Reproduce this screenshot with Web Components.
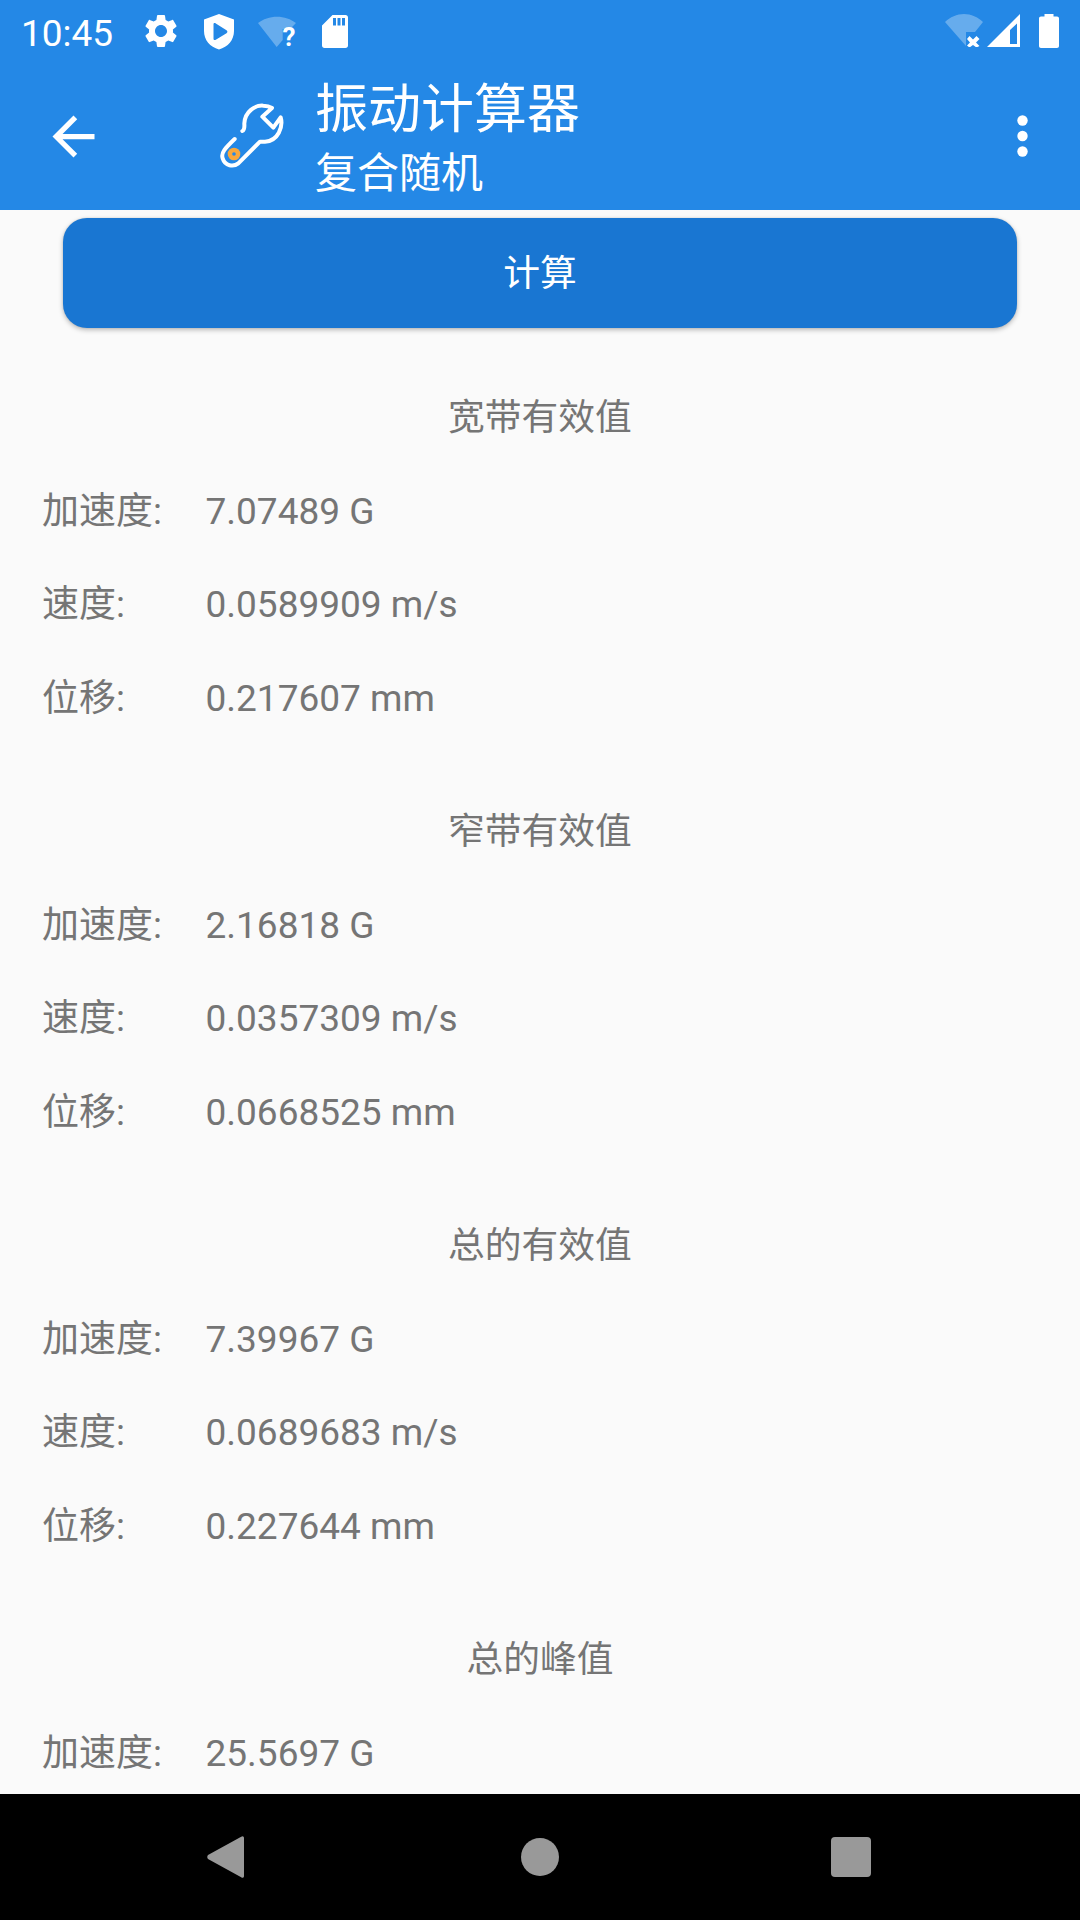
<!DOCTYPE html>
<html lang="zh-CN"><head><meta charset="utf-8"><title>振动计算器</title>
<style>
html,body{margin:0;padding:0;background:#fafafa}
body{font-family:Roboto,"Noto Sans CJK SC",sans-serif;width:1080px;height:1920px;overflow:hidden}
vib-app{display:flex}
</style></head><body>
<vib-app>
  <result-section heading="宽带有效值">
    <result-row label="加速度:" value="7.07489 G"></result-row>
    <result-row label="速度:" value="0.0589909 m/s"></result-row>
    <result-row label="位移:" value="0.217607 mm"></result-row>
  </result-section>
  <result-section heading="窄带有效值">
    <result-row label="加速度:" value="2.16818 G"></result-row>
    <result-row label="速度:" value="0.0357309 m/s"></result-row>
    <result-row label="位移:" value="0.0668525 mm"></result-row>
  </result-section>
  <result-section heading="总的有效值">
    <result-row label="加速度:" value="7.39967 G"></result-row>
    <result-row label="速度:" value="0.0689683 m/s"></result-row>
    <result-row label="位移:" value="0.227644 mm"></result-row>
  </result-section>
  <result-section heading="总的峰值">
    <result-row label="加速度:" value="25.5697 G"></result-row>
  </result-section>
</vib-app>
<script>
const def=(name,html,extra)=>customElements.define(name,class extends HTMLElement{
  constructor(){super();this.attachShadow({mode:'open'}).innerHTML=html;}
  connectedCallback(){if(extra)extra(this);}
});
def('status-bar',`<style>
:host{display:flex;align-items:flex-start;height:63px;background:#2488e6;color:#fff;box-sizing:border-box;flex:none}
.t{font:37px/1 Roboto,sans-serif;margin:15px 0 0 21px;width:120px;height:42px;flex:none}
svg{display:block;flex:none;fill:#fff}
.sp{flex:1}
</style>
<div class="t">10:45</div>
<svg width="40" height="40" viewBox="0 0 24 24" style="margin-top:11px"><path d="M19.14 12.94c.04-.3.06-.61.06-.94 0-.32-.02-.64-.07-.94l2.03-1.58c.18-.14.23-.41.12-.61l-1.92-3.32c-.12-.22-.37-.29-.59-.22l-2.39.96c-.5-.38-1.03-.7-1.62-.94l-.36-2.54c-.04-.24-.24-.41-.48-.41h-3.84c-.24 0-.43.17-.47.41l-.36 2.54c-.59.24-1.13.57-1.62.94l-2.39-.96c-.22-.08-.47 0-.59.22L2.74 8.87c-.12.21-.08.47.12.61l2.03 1.58c-.05.3-.09.63-.09.94s.02.64.07.94l-2.03 1.58c-.18.14-.23.41-.12.61l1.92 3.32c.12.22.37.29.59.22l2.39-.96c.5.38 1.03.7 1.62.94l.36 2.54c.05.24.24.41.48.41h3.84c.24 0 .44-.17.47-.41l.36-2.54c.59-.24 1.13-.56 1.62-.94l2.39.96c.22.08.47 0 .59-.22l1.92-3.32c.12-.22.07-.47-.12-.61l-2.01-1.58zM12 15.6c-1.98 0-3.6-1.62-3.6-3.6s1.62-3.6 3.6-3.6 3.6 1.62 3.6 3.6-1.62 3.6-3.6 3.6z"/></svg>
<svg width="30" height="36" viewBox="0 0 30 36" style="margin:14px 0 0 23px"><path fill-rule="evenodd" d="M15 0L30 5.5V17C30 26 24 33 15 35.5C6 33 0 26 0 17V5.5ZM9.5 10.5V24.5C9.5 26 10.6 26.4 11.8 25.7L22.5 19.2C23.7 18.4 23.7 17 22.5 16.2L11.8 9.4C10.6 8.7 9.5 9 9.5 10.5Z"/></svg>
<svg width="44" height="40" viewBox="0 0 44 40" style="margin:16px 0 0 24px"><path fill-opacity=".3" d="M0 7C5 3 12 .7 19 .7C26 .7 33 3 38 7L32 13H24.7V24L18.7 31Z"/><text x="31" y="30" text-anchor="middle" font-family="Roboto,sans-serif" font-weight="700" font-size="26" fill="#fff">?</text></svg>
<svg width="26" height="33" viewBox="0 0 26 33" style="margin:15px 0 0 20px"><path fill-rule="evenodd" d="M10.5 0H23.5C25 0 26 1 26 2.5V30.5C26 32 25 33 23.5 33H2.5C1 33 0 32 0 30.5V10.5ZM11 3V10.5H14V3ZM15.5 3V10.5H18.5V3ZM20 3V10.5H23V3Z"/></svg>
<div class="sp"></div>
<svg width="38" height="33" viewBox="0 0 38 33" style="margin-top:14px"><path fill-opacity=".3" d="M0 8C5 3 12 0 19 0C26 0 33 3 38 8L30 18H21V32Z"/><path d="M24.5 22L28 25.5L31.5 22L34.5 25L31 28.5L34.5 32L31.5 33.5L28 31L24.5 33.5L22 31.5L25 28.5L22 25Z"/></svg>
<svg width="33" height="33" viewBox="0 0 33 33" style="margin:14px 0 0 4px"><path fill-rule="evenodd" d="M33 0V33H0ZM23 30H30V9.5L23 16Z"/></svg>
<svg width="20" height="34" viewBox="0 0 20 34" style="margin:14px 21px 0 19px"><path d="M5.5 0H14.5V2.5H18C19.2 2.5 20 3.3 20 4.5V32C20 33.2 19.2 34 18 34H2C.8 34 0 33.2 0 32V4.5C0 3.3.8 2.5 2 2.5H5.5Z"/></svg>`);

def('app-bar',`<style>
:host{display:flex;align-items:flex-start;height:147px;background:#2488e6;color:#fff;box-sizing:border-box;font-family:Roboto,"Noto Sans CJK SC",sans-serif;flex:none}
svg{display:block;flex:none}
.txt{display:flex;flex-direction:column;margin:16px 0 0 -5px;flex:1}
.a{font-size:53px;line-height:62px;height:62px;white-space:nowrap}
.b{font-size:42px;line-height:50px;height:50px;margin-top:8px;white-space:nowrap}
</style>
<svg width="63" height="63" viewBox="0 0 24 24" style="margin:41.5px 0 0 42px" fill="#fff"><path d="M20 11H7.83l5.59-5.59L12 4l-8 8 8 8 1.41-1.41L7.83 13H20v-2z"/></svg>
<svg width="120" height="100" viewBox="0 0 360 300" style="margin:17px 0 0 95px"><path d="M127 153C135 150 133 140 133 130C135 95 165 75 190 77C200 77 210 80 216 84L187 110L220 143L242 112C250 140 235 183 195 185L180 185L115 250C100 262 75 258 68 235C62 218 75 205 104 177" fill="none" stroke="#fff" stroke-width="12" stroke-linecap="round" stroke-linejoin="round"/><circle cx="102" cy="222" r="19" fill="#f9a83b"/><circle cx="102" cy="222" r="5.5" fill="#2488e6"/></svg>
<div class="txt"><div class="a">振动计算器</div><div class="b">复合随机</div></div>
<svg width="11" height="42" viewBox="0 0 11 42" style="margin:52px 52px 0 0" fill="#fff"><circle cx="5.5" cy="5.5" r="5.2"/><circle cx="5.5" cy="21" r="5.2"/><circle cx="5.5" cy="36.5" r="5.2"/></svg>`);

def('calc-button',`<style>
:host{display:flex;flex:none;align-items:center;justify-content:center;height:110px;padding-top:2px;box-sizing:border-box;margin:8px 63px 0;background:#1976d2;color:#fff;border-radius:24px;font:36.75px/1 Roboto,"Noto Sans CJK SC",sans-serif;box-shadow:0 2px 5px rgba(0,0,0,.26),0 0 2px rgba(0,0,0,.12)}
</style><slot></slot>`);

def('nav-bar',`<style>
:host{display:flex;align-items:center;height:126px;background:#000;padding-left:207px;box-sizing:border-box;flex:none}
svg{display:block;flex:none;fill:#999}
</style>
<svg width="38" height="42" viewBox="0 0 38 42"><path d="M37 2C37 .3 35.5-.5 34.2.8L1 19C0 20 0 22 1 23L34.2 41.2C35.5 42.5 37 41.7 37 40Z"/></svg>
<svg width="38" height="38" viewBox="0 0 38 38" style="margin-left:276px"><circle cx="19" cy="19" r="19"/></svg>
<svg width="40" height="40" viewBox="0 0 40 40" style="margin-left:272px"><rect width="40" height="40" rx="4"/></svg>`);

def('result-row',`<style>
:host{display:flex;align-items:center;height:93.33px;padding-left:42px;color:#757575;font:37px/1 Roboto,"Noto Sans CJK SC",sans-serif;white-space:nowrap}
.l{width:163.5px;flex:none}
</style><div class="l"></div><div class="v"></div>`,el=>{
  el.shadowRoot.querySelector('.l').textContent=el.getAttribute('label');
  el.shadowRoot.querySelector('.v').textContent=el.getAttribute('value');
});

def('result-section',`<style>
:host{display:block;margin-bottom:40.7px}
.h{display:flex;align-items:center;justify-content:center;height:93.33px;color:#757575;font:36.75px/1 Roboto,"Noto Sans CJK SC",sans-serif}
</style><div class="h"></div><slot></slot>`,el=>{
  el.shadowRoot.querySelector('.h').textContent=el.getAttribute('heading');
});

def('vib-app',`<style>
:host{display:flex;flex-direction:column;width:1080px;height:1920px;background:#fafafa;overflow:hidden}
.content{flex:1;min-height:0;overflow:hidden;display:flex;flex-direction:column}
.list{margin-top:43.5px}
</style>
<status-bar></status-bar>
<app-bar></app-bar>
<div class="content"><calc-button>计算</calc-button><div class="list"><slot></slot></div></div>
<nav-bar></nav-bar>`);
</script>
</body></html>
